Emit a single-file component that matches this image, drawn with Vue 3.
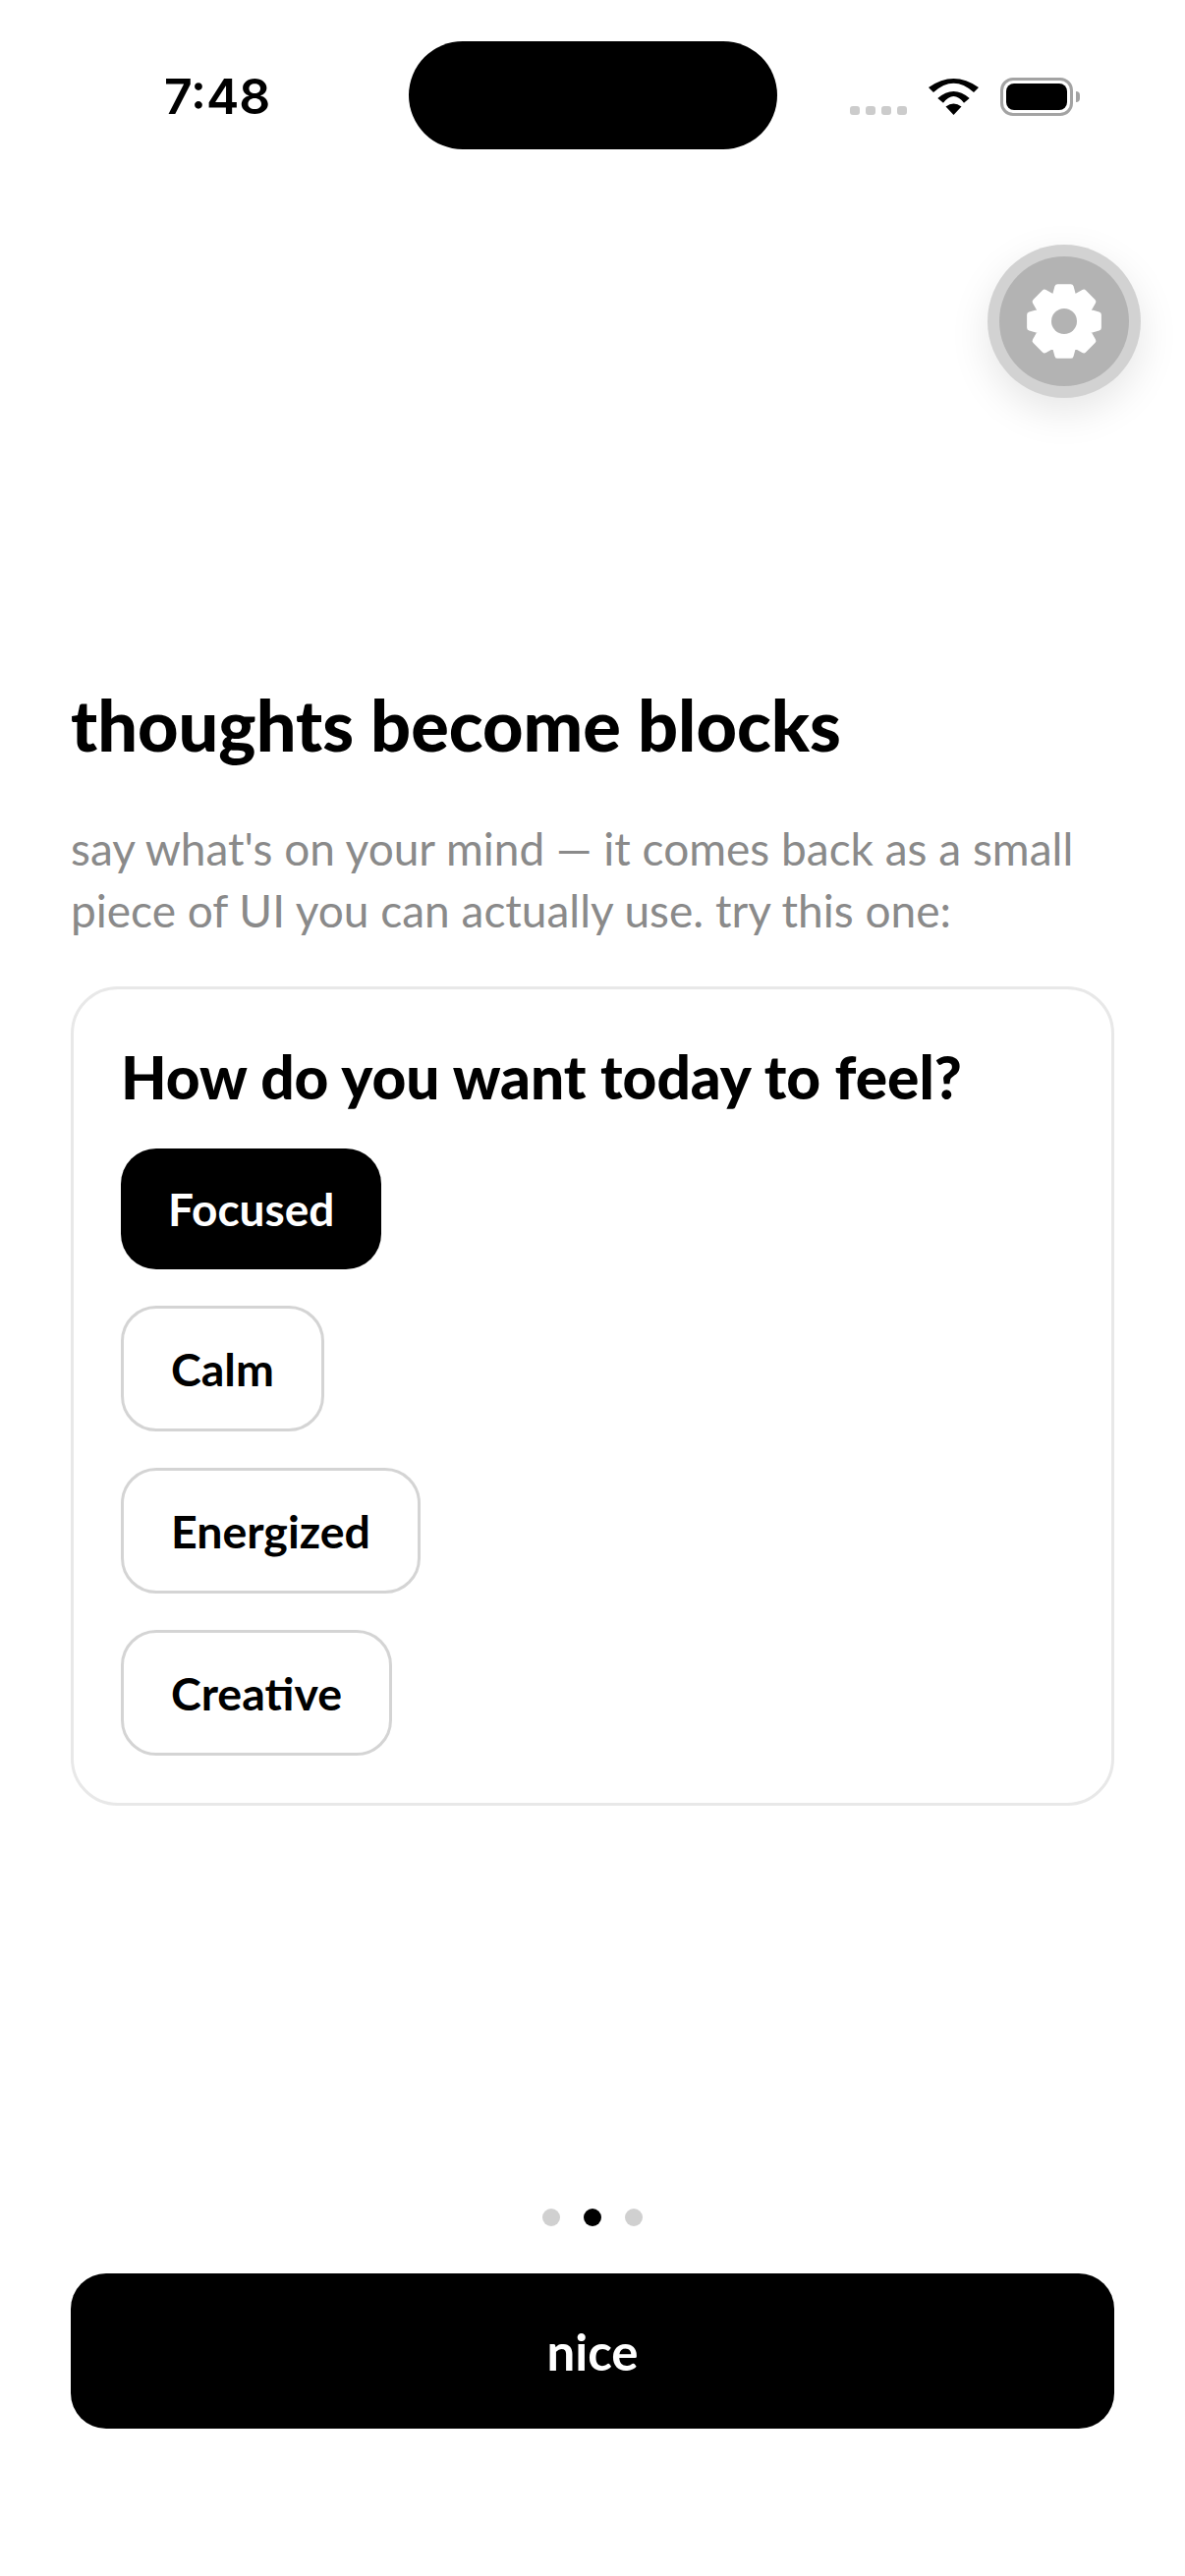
<script setup>
const options = ['Focused', 'Calm', 'Energized', 'Creative'];
const selected = 'Focused';
const pages = [0, 1, 2];
const currentPage = 1;

// builds the settings cog: eight teeth around a round body
const buildGear = (teeth, outer, inner) => {
    const step = (Math.PI * 2) / teeth;
    const points = [];
    for (let i = 0; i < teeth; i++) {
        const mid = i * step - Math.PI / 2;
        const offsets = [
            [-0.5, inner],
            [-0.24, outer],
            [0.24, outer],
            [0.5, inner],
        ];
        offsets.forEach(([part, radius]) => {
            const angle = mid + part * step;
            points.push(`${(radius * Math.cos(angle)).toFixed(2)} ${(radius * Math.sin(angle)).toFixed(2)}`);
        });
    }
    return `M${points.join('L')}Z`;
};

const gearPath = buildGear(8, 35.5, 25.5);
</script>

<template>
    <div class="screen">
        <header class="status-bar">
            <span class="clock">7:48</span>
            <div class="island"></div>
            <div class="status-icons">
                <div class="signal">
                    <i v-for="n in 4" :key="n"></i>
                </div>
                <svg class="wifi" width="51" height="37" viewBox="0 0 51 37">
                    <path d="M25.5 37 L17.5 28.5 Q25.5 22.5 33.5 28.5 Z" fill="#000" />
                    <path d="M9.3 20 Q25.5 6 41.7 20 L36 24.7 Q25.5 11.3 15 24.7 Z" fill="#000" />
                    <path d="M0 9 Q25.5 -9 51 9 L46 14 Q25.5 -4.6 5 14 Z" fill="#000" />
                </svg>
                <div class="battery">
                    <div class="battery-fill"></div>
                </div>
                <div class="battery-cap"></div>
            </div>
        </header>

        <div class="settings-row">
            <button class="settings-btn" type="button" aria-label="Settings">
                <svg width="78" height="78" viewBox="-39 -39 78 78">
                    <path :d="gearPath" fill="#fff" stroke="#fff" stroke-width="6" stroke-linejoin="round" />
                    <circle r="13" fill="#b3b3b3" />
                </svg>
            </button>
        </div>

        <main class="content">
            <h1 class="title">thoughts become blocks</h1>
            <p class="intro">say what's on your mind — it comes back as a small piece of UI you can actually use. try this one:</p>

            <section class="card">
                <h2 class="question">How do you want today to feel?</h2>
                <div class="options">
                    <button
                        v-for="option in options"
                        :key="option"
                        type="button"
                        class="option"
                        :class="{ 'is-selected': option === selected }"
                    >{{ option }}</button>
                </div>
            </section>
        </main>

        <footer class="footer">
            <div class="dots">
                <span
                    v-for="page in pages"
                    :key="page"
                    class="dot"
                    :class="{ 'is-current': page === currentPage }"
                ></span>
            </div>
            <button class="next-btn" type="button">nice</button>
        </footer>
    </div>
</template>

<style>
html,
body {
    margin: 0;
    background: #fff;
}
</style>

<style scoped>
.screen {
    width: 1206px;
    height: 2622px;
    box-sizing: border-box;
    padding: 0 72px;
    display: flex;
    flex-direction: column;
    background: #fff;
    color: #000;
    font-family: Lato, "Noto Sans", sans-serif;
    overflow: hidden;
}

.status-bar {
    height: 110px;
    margin: 42px -72px 0;
    display: grid;
    grid-template-columns: 1fr 375px 1fr;
    align-items: center;
}

.clock {
    justify-self: start;
    margin: 3px 0 0 167px;
    font-family: Inter, sans-serif;
    font-size: 50px;
    font-weight: 600;
    line-height: 107px;
}

.island {
    height: 110px;
    border-radius: 55px;
    background: #000;
}

.status-icons {
    display: flex;
    align-items: flex-end;
    margin-left: 74px;
    height: 39px;
    margin-bottom: -2px;
}

.signal {
    display: flex;
    gap: 6px;
    margin-bottom: 1px;
}

.signal i {
    width: 10px;
    height: 9px;
    border-radius: 3px;
    background: #ccc;
}

.wifi {
    margin: 0 0 1px 22px;
}

.battery {
    width: 74px;
    height: 39px;
    margin-left: 22px;
    box-sizing: border-box;
    border: 3px solid #a3a3a3;
    border-radius: 13px;
    padding: 3px;
}

.battery-fill {
    height: 100%;
    border-radius: 8px;
    background: #000;
}

.battery-cap {
    width: 4px;
    height: 11px;
    margin: 0 0 14px 3px;
    border-radius: 0 4px 4px 0;
    background: #a3a3a3;
}

.settings-row {
    display: flex;
    justify-content: flex-end;
    margin: 109px -15px 0 0;
}

.settings-btn {
    width: 132px;
    height: 132px;
    padding: 0;
    border: 0;
    border-radius: 50%;
    display: flex;
    align-items: center;
    justify-content: center;
    background: #b3b3b3;
    box-shadow: 0 0 0 12px #d2d2d2, 0 14px 40px 12px rgba(0, 0, 0, 0.1);
}

.content {
    flex: 1;
    margin-top: 299px;
}

.title {
    margin: 0;
    font-size: 72px;
    line-height: 90px;
    font-weight: 900;
}

.intro {
    margin: 50px 0 0;
    font-size: 46px;
    line-height: 63px;
    color: #8a8a8a;
    font-weight: 400;
}

.card {
    margin-top: 46px;
    height: 834px;
    box-sizing: border-box;
    padding: 53px 48px 48px;
    border: 3px solid #e8e8e8;
    border-radius: 48px;
}

.question {
    margin: 0;
    font-size: 60.4px;
    line-height: 72px;
    font-weight: 900;
}

.options {
    display: flex;
    flex-direction: column;
    align-items: flex-start;
    gap: 37px;
    margin-top: 37px;
}

.option {
    height: 128px;
    padding: 0 48px;
    box-sizing: border-box;
    border: 3px solid #d4d4d4;
    border-radius: 36px;
    background: #fff;
    color: #000;
    font: 700 46.5px Lato, "Noto Sans", sans-serif;
}

.option.is-selected {
    height: 123px;
    padding: 0 48px;
    border: 0;
    background: #000;
    color: #fff;
    font-size: 46px;
}

.footer {
    display: flex;
    flex-direction: column;
    padding-bottom: 150px;
}

.dots {
    display: flex;
    justify-content: center;
    gap: 24px;
}

.dot {
    width: 18px;
    height: 18px;
    border-radius: 50%;
    background: #d0d0d0;
}

.dot.is-current {
    background: #000;
}

.next-btn {
    height: 158px;
    margin-top: 48px;
    border: 0;
    border-radius: 36px;
    background: #000;
    color: #fff;
    font: 700 51px Lato, "Noto Sans", sans-serif;
}
</style>
